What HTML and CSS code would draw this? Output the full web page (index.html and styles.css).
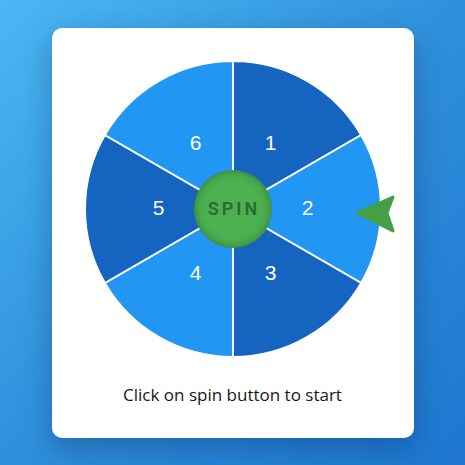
FILE: index.html
```html
<!DOCTYPE html>
<html lang="en">
<head>
<meta charset="utf-8">
<title>Spin Wheel</title>
<link rel="stylesheet" href="styles.css">
</head>
<body>
<main class="card">
  <div class="wheel-wrap">
    <svg class="wheel" viewBox="0 0 296 296" width="296" height="296">
      <g stroke="#ffffff" stroke-width="2" stroke-linejoin="miter">
        <path class="seg-dark" d="M148 148 L148 0 A148 148 0 0 1 276.17 74 Z"/>
        <path class="seg-light" d="M148 148 L276.17 74 A148 148 0 0 1 276.17 222 Z"/>
        <path class="seg-dark" d="M148 148 L276.17 222 A148 148 0 0 1 148 296 Z"/>
        <path class="seg-light" d="M148 148 L148 296 A148 148 0 0 1 19.83 222 Z"/>
        <path class="seg-dark" d="M148 148 L19.83 222 A148 148 0 0 1 19.83 74 Z"/>
        <path class="seg-light" d="M148 148 L19.83 74 A148 148 0 0 1 148 0 Z"/>
      </g>
      <g class="labels">
        <text x="185.5" y="81.5">1</text>
        <text x="222.5" y="146.5">2</text>
        <text x="185.5" y="211.5">3</text>
        <text x="110.5" y="211.5">4</text>
        <text x="73.5" y="146.5">5</text>
        <text x="110.5" y="81.5">6</text>
      </g>
    </svg>
    <button class="spin" type="button">SPIN</button>
    <svg class="pointer" viewBox="0 0 42 40" width="42" height="40">
      <path d="M3 19 L39 3 L33 19 L39 37 Z" fill="#43a047" stroke="#43a047" stroke-width="3" stroke-linejoin="round"/>
    </svg>
  </div>
  <p class="hint">Click on spin button to start</p>
</main>
</body>
</html>
```

FILE: styles.css
```css
* { box-sizing: border-box; }

html, body {
  margin: 0;
  padding: 0;
}

body {
  min-height: 100vh;
  display: flex;
  align-items: center;
  justify-content: center;
  background: linear-gradient(135deg, #4ab7f3 0%, #2f90dc 50%, #1e76d1 100%);
  font-family: "Open Sans", "Liberation Sans", sans-serif;
}

.card {
  width: 362px;
  height: 410px;
  background: #ffffff;
  border-radius: 10px;
  padding: 33px 33px 0;
  box-shadow: 0 10px 30px rgba(0, 0, 40, 0.25);
  display: flex;
  flex-direction: column;
  align-items: center;
}

.wheel-wrap {
  position: relative;
  width: 296px;
  height: 296px;
}

.wheel {
  display: block;
}

.seg-dark { fill: #1565c0; }
.seg-light { fill: #2196f3; }

.labels text {
  fill: #ffffff;
  font-family: "Liberation Sans", Arial, sans-serif;
  font-size: 21px;
  text-anchor: middle;
  dominant-baseline: central;
}

.spin {
  position: absolute;
  left: 109px;
  top: 109px;
  width: 78px;
  height: 78px;
  border: none;
  border-radius: 50%;
  background: #4caf50;
  box-shadow: inset 0 0 8px rgba(0, 0, 0, 0.35);
  color: #2c6b2f;
  font-family: Roboto, "Liberation Sans", sans-serif;
  font-weight: 600;
  font-size: 18px;
  letter-spacing: 3px;
  padding: 0 0 0 3px;
  cursor: pointer;
}

.pointer {
  position: absolute;
  left: 269px;
  top: 133px;
}

.hint {
  margin: 26px 0 0;
  font-size: 17px;
  line-height: 24px;
  color: #161616;
  text-align: center;
}
```
